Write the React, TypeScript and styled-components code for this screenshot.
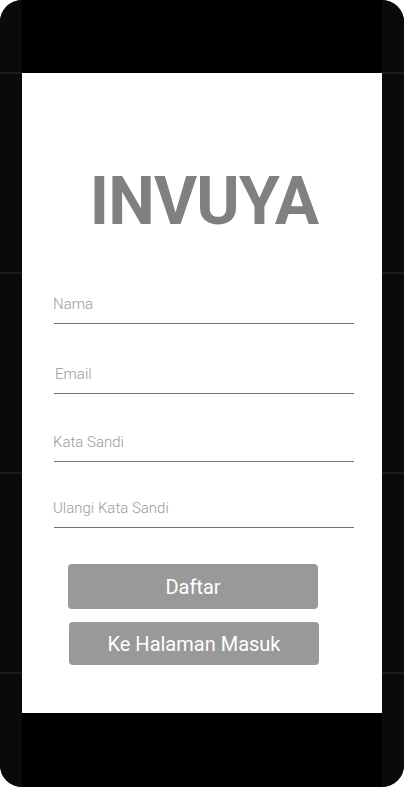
import React from "react";
import styled, { createGlobalStyle } from "styled-components";

const Global = createGlobalStyle`
  html, body { margin: 0; padding: 0; background: #ffffff; }
  body { font-family: Roboto, "Liberation Sans", sans-serif; }
  * { box-sizing: border-box; }
`;

const Device = styled.div`
  width: 404px;
  height: 787px;
  border-radius: 22px;
  overflow: hidden;
  background: #0a0a0a;
  display: grid;
  grid-template-columns: 22px 360px 22px;
`;

const Rail = styled.div`
  background-color: #0a0a0a;
  background-image: repeating-linear-gradient(
    to bottom,
    transparent 0px,
    transparent 72px,
    #1c1c1c 72px,
    #1c1c1c 74px,
    transparent 74px,
    transparent 200px
  );
`;

const Screen = styled.div`
  display: flex;
  flex-direction: column;
  background: #000;
`;

const Bar = styled.div<{ $h: number }>`
  height: ${(p) => p.$h}px;
  background: #000;
  flex: none;
`;

const Panel = styled.main`
  height: 640px;
  background: #ffffff;
  display: flex;
  flex-direction: column;
  padding-top: 96px;
`;

const Title = styled.h1`
  margin: 0 0 61px;
  font-family: Roboto, "Liberation Sans", sans-serif;
  font-weight: 700;
  font-size: 66px;
  line-height: 66px;
  color: #808080;
  text-align: center;
  padding-left: 4px;
  letter-spacing: -0.8px;
`;

const Field = styled.label<{ $mt: number }>`
  display: block;
  width: 300px;
  margin: ${(p) => p.$mt}px 0 0 32px;
  border-bottom: 1px solid #737373;
`;

const Input = styled.input<{ $dx: number }>`
  display: block;
  width: 100%;
  height: 27px;
  padding: 0 0 12px 0;
  margin-left: ${(p) => p.$dx}px;
  border: none;
  outline: none;
  background: transparent;
  font-family: Roboto, "Liberation Sans", sans-serif;
  font-weight: 300;
  font-size: 15px;
  line-height: 15px;
  color: #555;
  &::placeholder {
    color: #9a9a9a;
    opacity: 1;
  }
`;

const Button = styled.button<{ $mt: number; $h: number; $ml: number }>`
  display: block;
  width: 250px;
  height: ${(p) => p.$h}px;
  margin: ${(p) => p.$mt}px 0 0 ${(p) => p.$ml}px;
  border: none;
  border-radius: 4px;
  background: #999999;
  color: #ffffff;
  font-family: Roboto, "Liberation Sans", sans-serif;
  font-weight: 400;
  font-size: 20px;
  padding: 0;
  cursor: pointer;
`;

export default function App() {
  return (
    <>
      <Global />
      <Device>
        <Rail />
        <Screen>
          <Bar $h={73} />
          <Panel>
            <Title>INVUYA</Title>
            <Field $mt={0}>
              <Input $dx={-1} type="text" placeholder="Nama" />
            </Field>
            <Field $mt={42}>
              <Input $dx={1} type="email" placeholder="Email" />
            </Field>
            <Field $mt={40}>
              <Input $dx={-1} type="password" placeholder="Kata Sandi" />
            </Field>
            <Field $mt={38}>
              <Input $dx={-1} type="password" placeholder="Ulangi Kata Sandi" />
            </Field>
            <Button $mt={36} $h={45} $ml={46}>Daftar</Button>
            <Button $mt={13} $h={43} $ml={47}>Ke Halaman Masuk</Button>
          </Panel>
          <Bar $h={74} />
        </Screen>
        <Rail />
      </Device>
    </>
  );
}
